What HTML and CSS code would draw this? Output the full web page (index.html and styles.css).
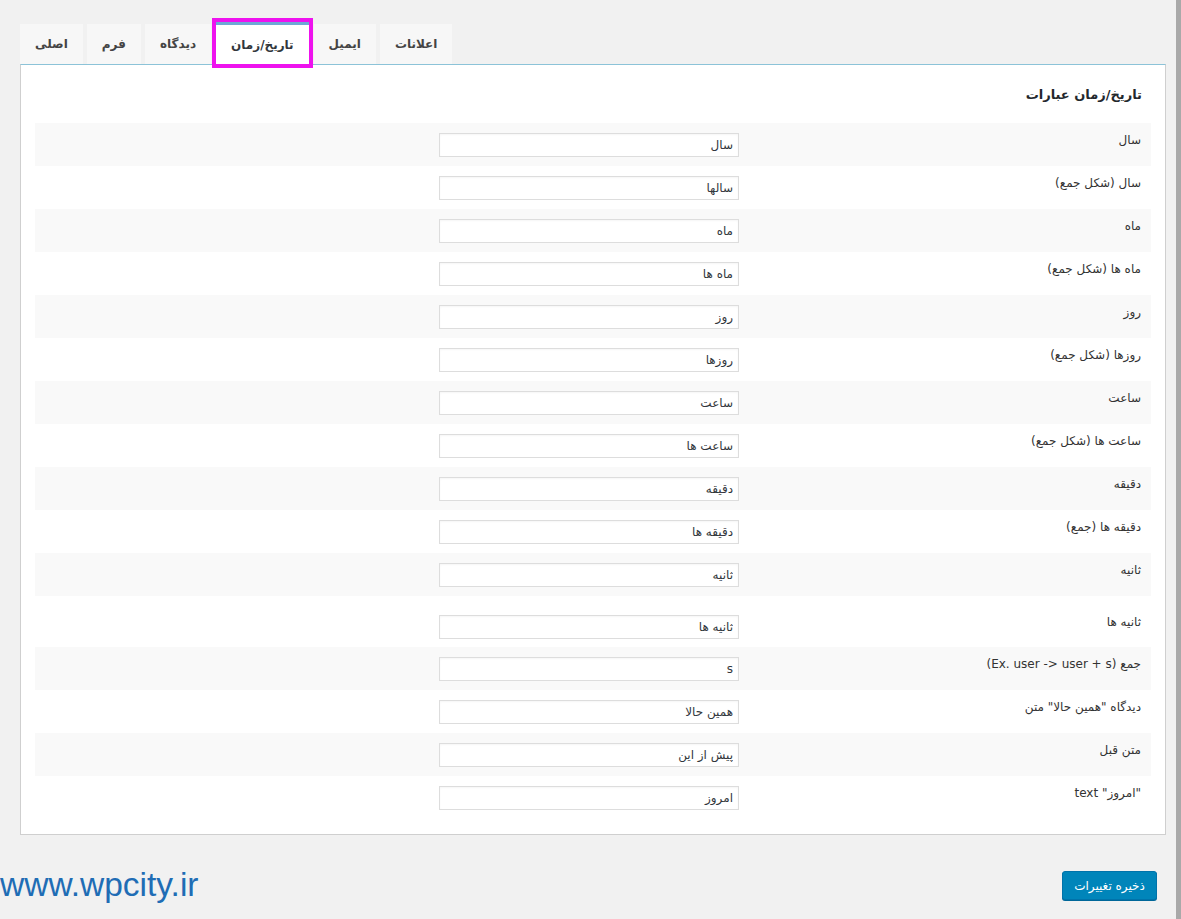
FILE: index.html
```html
<!DOCTYPE html>
<html lang="fa">
<head>
<meta charset="utf-8">
<title>تنظیمات</title>
<link rel="stylesheet" href="styles.css">
</head>
<body>
<div class="page">
  <div class="main">
    <nav class="tabs">
      <a class="tab">اصلی</a>
      <a class="tab">فرم</a>
      <a class="tab">دیدگاه</a>
      <a class="tab tab-active">تاریخ/زمان</a>
      <a class="tab">ایمیل</a>
      <a class="tab">اعلانات</a>
    </nav>
    <section class="panel">
      <h3 class="panel-title">تاریخ/زمان عبارات</h3>
      <div class="form-table">
        <div class="row"><div class="label">سال</div><div class="field"><input class="text" value="سال"></div></div>
        <div class="row"><div class="label">سال (شکل جمع)</div><div class="field"><input class="text" value="سالها"></div></div>
        <div class="row"><div class="label">ماه</div><div class="field"><input class="text" value="ماه"></div></div>
        <div class="row"><div class="label">ماه ها (شکل جمع)</div><div class="field"><input class="text" value="ماه ها"></div></div>
        <div class="row"><div class="label">روز</div><div class="field"><input class="text" value="روز"></div></div>
        <div class="row"><div class="label">روزها (شکل جمع)</div><div class="field"><input class="text" value="روزها"></div></div>
        <div class="row"><div class="label">ساعت</div><div class="field"><input class="text" value="ساعت"></div></div>
        <div class="row"><div class="label">ساعت ها (شکل جمع)</div><div class="field"><input class="text" value="ساعت ها"></div></div>
        <div class="row"><div class="label">دقیقه</div><div class="field"><input class="text" value="دقیقه"></div></div>
        <div class="row"><div class="label">دقیقه ها (جمع)</div><div class="field"><input class="text" value="دقیقه ها"></div></div>
        <div class="row"><div class="label">ثانیه</div><div class="field"><input class="text" value="ثانیه"></div></div>
        <div class="row row-tall"><div class="label">ثانیه ها</div><div class="field"><input class="text" value="ثانیه ها"></div></div>
        <div class="row"><div class="label">جمع <span dir="ltr">(Ex. user -&gt; user + s)</span></div><div class="field"><input class="text" value="s"></div></div>
        <div class="row"><div class="label">دیدگاه "همین حالا" متن</div><div class="field"><input class="text" value="همین حالا"></div></div>
        <div class="row"><div class="label">متن قبل</div><div class="field"><input class="text" value="پیش از این"></div></div>
        <div class="row"><div class="label">"امروز" text</div><div class="field"><input class="text" value="امروز"></div></div>
      </div>
    </section>
    <div class="actions">
      <button class="button-primary">ذخیره تغییرات</button>
    </div>
  </div>
  <div class="edge"></div>
</div>
<div class="watermark">www.wpcity.ir</div>
</body>
</html>
```

FILE: styles.css
```css
html, body {
  margin: 0;
  padding: 0;
}
body {
  background: #f1f1f1;
  font-family: "DejaVu Sans", "Liberation Sans", sans-serif;
  color: #23282d;
  font-size: 12px;
  position: relative;
  height: 919px;
  overflow: hidden;
}
.page {
  display: flex;
  height: 919px;
}
.main {
  flex: 1;
  padding: 23px 10px 0 20px;
}
.edge {
  width: 5px;
  background: #a9a9a9;
}
.tabs {
  display: flex;
  gap: 4px;
  height: 41px;
  align-items: flex-end;
}
.tab {
  display: flex;
  align-items: center;
  justify-content: center;
  height: 40px;
  box-sizing: border-box;
  padding: 0 15px;
  background: #f7f7f7;
  color: #444;
  font-weight: bold;
  font-size: 12px;
  direction: rtl;
}
.tab-active {
  background: #fff;
  border-top: 3px solid #6ea8d5;
  height: 42px;
  padding: 0 15px;
  margin: 0 1px 0 1px;
  outline: 4px solid #ee12ee;
  outline-offset: 0;
  position: relative;
  z-index: 2;
  color: #32373c;
}
.panel {
  background: #fff;
  border: 1px solid #cfcfcf;
  border-top-color: #8cc3d8;
  padding: 14px 14px 15px 14px;
  direction: rtl;
}
.panel-title {
  margin: 8px 9px 0 0;
  font-size: 13px;
  font-weight: bold;
  height: 36px;
  color: #23282d;
}
.form-table {
  display: flex;
  flex-direction: column;
}
.row {
  display: grid;
  grid-template-columns: 402px 1fr;
  height: 43px;
  box-sizing: border-box;
  padding-top: 10px;
}
.row:nth-child(odd) {
  background: #f9f9f9;
}
.row-tall {
  height: 51px;
  padding-top: 19px;
}
.label {
  padding-right: 10px;
  font-size: 12px;
  line-height: 14px;
  color: #333;
}
.field {
  padding-right: 10px;
}
.text {
  display: block;
  width: 300px;
  height: 24px;
  box-sizing: border-box;
  border: 1px solid #ddd;
  box-shadow: inset 0 1px 2px rgba(0,0,0,0.04);
  background: #fff;
  font-family: "DejaVu Sans", "Liberation Sans", sans-serif;
  font-size: 12px;
  color: #32373c;
  padding: 0 5px;
  direction: rtl;
  text-align: right;
  margin: 0;
}
.actions {
  display: flex;
  justify-content: flex-start;
  direction: rtl;
  padding: 36px 0 0 0;
}
.button-primary {
  background: #0085ba;
  border: 1px solid #0073aa;
  border-radius: 3px;
  color: #fff;
  font-family: "DejaVu Sans", "Liberation Sans", sans-serif;
  font-size: 12px;
  height: 29px;
  width: 95px;
  padding: 0;
  margin-right: 9px;
  box-shadow: 0 1px 0 #006799;
  direction: rtl;
}
.watermark {
  position: absolute;
  left: 0;
  top: 865px;
  font-family: "Liberation Sans", Arial, sans-serif;
  font-size: 33.5px;
  color: #1f6db5;
  line-height: 40px;
}
```
